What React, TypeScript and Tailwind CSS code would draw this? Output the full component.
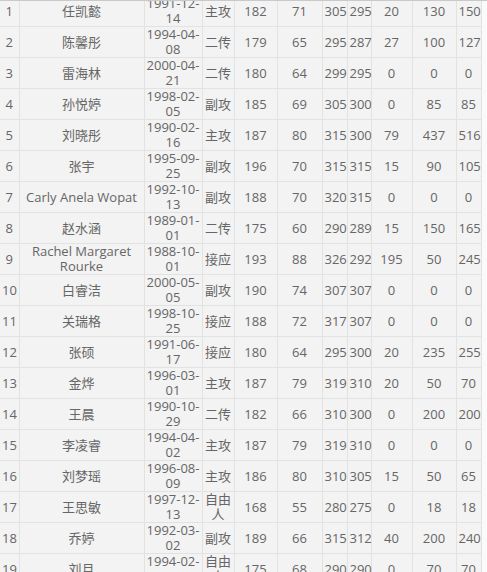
import React from "react";

type Player = {
  no: number;
  name: string;
  birth: string;
  pos: string;
  height: number;
  weight: number;
  spike: number;
  block: number;
  a: number;
  b: number;
  total: number;
};

const players: Player[] = [
  { no: 1, name: "任凯懿", birth: "1991-12-14", pos: "主攻", height: 182, weight: 71, spike: 305, block: 295, a: 20, b: 130, total: 150 },
  { no: 2, name: "陈馨彤", birth: "1994-04-08", pos: "二传", height: 179, weight: 65, spike: 295, block: 287, a: 27, b: 100, total: 127 },
  { no: 3, name: "雷海林", birth: "2000-04-21", pos: "二传", height: 180, weight: 64, spike: 299, block: 295, a: 0, b: 0, total: 0 },
  { no: 4, name: "孙悦婷", birth: "1998-02-05", pos: "副攻", height: 185, weight: 69, spike: 305, block: 300, a: 0, b: 85, total: 85 },
  { no: 5, name: "刘晓彤", birth: "1990-02-16", pos: "主攻", height: 187, weight: 80, spike: 315, block: 300, a: 79, b: 437, total: 516 },
  { no: 6, name: "张宇", birth: "1995-09-25", pos: "副攻", height: 196, weight: 70, spike: 315, block: 315, a: 15, b: 90, total: 105 },
  { no: 7, name: "Carly Anela Wopat", birth: "1992-10-13", pos: "副攻", height: 188, weight: 70, spike: 320, block: 315, a: 0, b: 0, total: 0 },
  { no: 8, name: "赵水涵", birth: "1989-01-01", pos: "二传", height: 175, weight: 60, spike: 290, block: 289, a: 15, b: 150, total: 165 },
  { no: 9, name: "Rachel Margaret Rourke", birth: "1988-10-01", pos: "接应", height: 193, weight: 88, spike: 326, block: 292, a: 195, b: 50, total: 245 },
  { no: 10, name: "白睿洁", birth: "2000-05-05", pos: "副攻", height: 190, weight: 74, spike: 307, block: 307, a: 0, b: 0, total: 0 },
  { no: 11, name: "关瑞格", birth: "1998-10-25", pos: "接应", height: 188, weight: 72, spike: 317, block: 307, a: 0, b: 0, total: 0 },
  { no: 12, name: "张硕", birth: "1991-06-17", pos: "接应", height: 180, weight: 64, spike: 295, block: 300, a: 20, b: 235, total: 255 },
  { no: 13, name: "金烨", birth: "1996-03-01", pos: "主攻", height: 187, weight: 79, spike: 319, block: 310, a: 20, b: 50, total: 70 },
  { no: 14, name: "王晨", birth: "1990-10-29", pos: "二传", height: 182, weight: 66, spike: 310, block: 300, a: 0, b: 200, total: 200 },
  { no: 15, name: "李凌睿", birth: "1994-04-02", pos: "主攻", height: 187, weight: 79, spike: 319, block: 310, a: 0, b: 0, total: 0 },
  { no: 16, name: "刘梦瑶", birth: "1996-08-09", pos: "主攻", height: 186, weight: 80, spike: 310, block: 305, a: 15, b: 50, total: 65 },
  { no: 17, name: "王思敏", birth: "1997-12-13", pos: "自由人", height: 168, weight: 55, spike: 280, block: 275, a: 0, b: 18, total: 18 },
  { no: 18, name: "乔婷", birth: "1992-03-02", pos: "副攻", height: 189, weight: 66, spike: 315, block: 312, a: 40, b: 200, total: 240 },
  { no: 19, name: "刘月", birth: "1994-02-10", pos: "自由人", height: 175, weight: 68, spike: 290, block: 290, a: 0, b: 70, total: 70 },
];

// column widths measured off the screenshot
const widths = [19, 125, 58, 32, 43, 45, 25, 24, 41, 44, 25];

const cell = "border border-[#e2e2e2] px-[2px] py-0 text-center align-middle h-[30px]";

export default function App() {
  return (
    <div
      className="min-h-[572px] w-full overflow-hidden border-t border-[#c9c9c9] bg-[#fafafa] text-[13px] leading-[15px] text-[#666]"
      style={{ fontFamily: '"Open Sans", "Noto Sans CJK SC", sans-serif' }}
    >
      <table className="-mt-[6px] w-[481px] table-fixed border-collapse bg-[#f3f3f3]">
        <colgroup>
          {widths.map((w, i) => (
            <col key={i} style={{ width: w }} />
          ))}
        </colgroup>
        <tbody>
          {players.map((p) => (
            <tr key={p.no}>
              <td className={`${cell} border-l-0`}>{p.no}</td>
              <td className={cell}>{p.name}</td>
              <td className={cell}>{p.birth}</td>
              <td className={cell}>{p.pos}</td>
              <td className={cell}>{p.height}</td>
              <td className={cell}>{p.weight}</td>
              <td className={`${cell} px-0`}>{p.spike}</td>
              <td className={`${cell} px-0`}>{p.block}</td>
              <td className={cell}>{p.a}</td>
              <td className={cell}>{p.b}</td>
              <td className={`${cell} px-0`}>{p.total}</td>
            </tr>
          ))}
        </tbody>
      </table>
    </div>
  );
}
